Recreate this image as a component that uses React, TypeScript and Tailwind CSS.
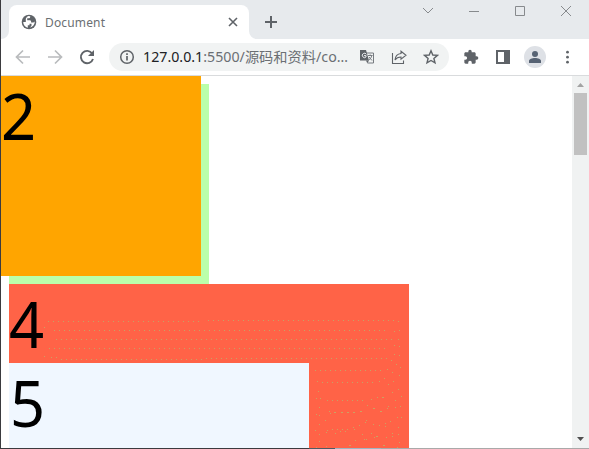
import React from 'react';

const FLECK_ROWS: [number, number, number][] = [
  [48, 203, 321], [208, 394, 320], [54, 389, 330], [56, 392, 339], [49, 389, 348],
  [61, 202, 359], [206, 387, 358], [315, 381, 370], [322, 373, 382], [327, 363, 400],
];

const FLECKS: [number, number][] = [
  [44, 327], [44, 356], [51, 357], [56, 357], [398, 321], [394, 331], [399, 330], [398, 339],
  [394, 345], [399, 346], [394, 354], [399, 355], [391, 360], [396, 364], [400, 367], [387, 369],
  [392, 372], [384, 378], [399, 375], [379, 381], [388, 384], [393, 381], [317, 381], [318, 391],
  [316, 398], [320, 398], [398, 389], [401, 396], [392, 392], [371, 399], [377, 397], [382, 397],
  [383, 397], [395, 400], [400, 406], [395, 407], [388, 406], [387, 408], [373, 408], [374, 408],
  [367, 405], [319, 407], [329, 411], [330, 413], [334, 412], [335, 412], [341, 412], [342, 412],
  [347, 412], [348, 412], [353, 412], [354, 412], [360, 411], [361, 411], [380, 411], [381, 411],
  [316, 414], [319, 415], [325, 420], [319, 424], [365, 422], [366, 420], [359, 425], [353, 427],
  [354, 429], [373, 424], [379, 425], [385, 423], [385, 426], [390, 421], [397, 417], [401, 417],
  [398, 427], [315, 430], [319, 434], [326, 432], [327, 430], [332, 429], [337, 429], [342, 429],
  [347, 429], [335, 433], [340, 431], [345, 431], [362, 434], [371, 433], [376, 436], [377, 436],
  [374, 437], [386, 437], [392, 436], [392, 433], [398, 434], [364, 439], [366, 439], [355, 440],
  [319, 441], [399, 442], [349, 445], [350, 445], [383, 445], [384, 445], [326, 446], [316, 447], [397, 447],
];

function TabStrip() {
  return (
    <div className="flex h-[39px] bg-[#e7eaed]">
      <div className="relative ml-2 mt-[5px] flex h-[34px] w-60 items-center rounded-t-lg bg-white pl-3 pr-[11px]">
        <svg className="absolute -left-2 bottom-0" width="8" height="8" viewBox="0 0 8 8"><path d="M8 0v8H0a8 8 0 0 0 8-8" fill="#fff" /></svg>
        <svg className="absolute -right-2 bottom-0" width="8" height="8" viewBox="0 0 8 8"><path d="M0 0v8h8a8 8 0 0 1-8-8" fill="#fff" /></svg>
        <svg width="16" height="16" viewBox="0 0 16 16">
          <circle cx="8" cy="8" r="7.3" fill="#5f6368" />
          <path d="M2.2 8.1h4c1.5 0 2.3.8 2.3 2v1.2H6.8v2.5C4.2 13.3 2.2 11 2.2 8.1M9.2 2.2v.5c0 .9-.7 1.6-1.6 1.6H6.2v1.9H8.6c.9 0 1.5.6 1.5 1.4v1h2.3l1.4-1.2c-.1 3.1-2 5.3-4.8 6.1l1.5-1.8V9.8H8.8C7.4 9.8 6.7 9 6.7 8H4.8V5.2C4.8 4 5.4 3.4 6.5 3V2.1z" fill="#fff" />
        </svg>
        <span className="ml-2 mt-px flex-1 text-[12px] tracking-[0.15px] text-[#6b6f73]">Document</span>
        <svg width="10" height="10" viewBox="0 0 10 10" stroke="#5f6368" strokeWidth="1.6"><path d="m1 1 8 8M9 1 1 9" /></svg>
      </div>
      <svg className="ml-4 mt-4" width="12" height="12" viewBox="0 0 12 12" stroke="#5f6368" strokeWidth="2"><path d="M0 6h12M6 0v12" /></svg>
      <div className="ml-auto mr-[17px] flex h-[22px] items-center text-[#878a8d]">
        <svg width="12" height="12" viewBox="0 0 12 12" fill="none" stroke="currentColor"><path d="m1 3 5 5 5-5" /></svg>
        <svg className="ml-[34px]" width="12" height="12" viewBox="0 0 12 12" stroke="currentColor"><path d="M1 6.5h10" /></svg>
        <svg className="ml-[34px]" width="12" height="12" viewBox="0 0 12 12" fill="none" stroke="currentColor"><path d="M1.5 1.5h9v9h-9z" /></svg>
        <svg className="ml-[34px]" width="12" height="12" viewBox="0 0 12 12" stroke="currentColor"><path d="m1 1 10 10M11 1 1 11" /></svg>
      </div>
    </div>
  );
}

function Toolbar() {
  return (
    <div className="flex h-[37px] items-center border-b border-[#d9dbdd] bg-white pl-[14px] text-[#5f6368]">
      <svg width="16" height="16" viewBox="0 0 16 16" fill="none" stroke="#b9bbbd" strokeWidth="1.7"><path d="M15 8H2M8 1.5 1.5 8 8 14.5" /></svg>
      <svg className="ml-4" width="16" height="16" viewBox="0 0 16 16" fill="none" stroke="#b9bbbd" strokeWidth="1.7"><path d="M1 8h13M8 1.5 14.5 8 8 14.5" /></svg>
      <svg className="ml-4" width="16" height="16" viewBox="0 0 16 16" fill="none" stroke="currentColor" strokeWidth="1.9"><path d="M13.2 4.5A6.2 6.2 0 1 0 14 10" /><path d="M15 1v6H9z" fill="currentColor" stroke="none" /></svg>
      <div className="ml-[14px] flex h-7 w-[340px] items-center rounded-full bg-[#f1f3f3] pl-[10px]">
        <svg width="16" height="16" viewBox="0 0 16 16" fill="none" stroke="currentColor"><circle cx="8" cy="8" r="6.3" strokeWidth="1.5" /><path d="M8 7v4.5M8 4.3v1.6" strokeWidth="1.7" /></svg>
        <div className="ml-2 flex w-[207px] whitespace-nowrap text-[14px] leading-5 text-[#6b6f73]">
          <svg className="overflow-visible" width="206" height="20">
            <text x="0" y="15" textLength="205" lengthAdjust="spacingAndGlyphs" fill="#6b6f73"><tspan fill="#202124">127.0.0.1</tspan>:5500/源码和资料/co…</text>
          </svg>
        </div>
        <svg className="ml-[9px]" width="16" height="16" viewBox="0 0 16 16">
          <path d="M6 4h8.5v10H8.5" fill="#f1f3f3" stroke="#777b80" />
          <path d="M1 1h6l3 10.5H1z" fill="#5f6368" />
          <path d="M7.4 5.3A2.2 2.2 0 1 0 7 8V6.6H5" fill="none" stroke="#e8eaed" />
          <path d="M9 6.5h4.5M11.2 5.5v1M12.8 6.5c-.4 2-1.5 3.5-3 4.5M10 8l3 3.5" fill="none" stroke="#777b80" />
          <path d="m7 11.5 3 0-1.7 2.8z" fill="#5f6368" />
        </svg>
        <svg className="ml-4" width="16" height="16" viewBox="0 0 16 16" fill="none" stroke="currentColor" strokeWidth="1.1"><path d="M1.5 4v10.5h11v-3" /><path d="M10 2.2 15 6.2l-5 4V8C7.3 8 5.3 9 4 11c.3-3.7 2.3-6.1 6-6.5z" /></svg>
        <svg className="ml-4" width="16" height="16" viewBox="0 0 16 16" fill="none" stroke="currentColor" strokeWidth="1.4"><path d="m8 1.8 1.8 4.2 4.6.4-3.5 3 1.1 4.5L8 11.5l-4 2.4 1.1-4.5-3.5-3L6.2 6z" /></svg>
      </div>
      <svg className="ml-[14px]" width="16" height="16" viewBox="0 0 24 24" fill="currentColor"><path d="M20.5 11H19V7c0-1.1-.9-2-2-2h-4V3.5a2.5 2.5 0 0 0-5 0V5H4c-1.1 0-2 .9-2 2v3.8h1.5a2.7 2.7 0 0 1 0 5.4H2V20c0 1.1.9 2 2 2h3.8v-1.5a2.7 2.7 0 0 1 5.4 0V22H17c1.1 0 2-.9 2-2v-4h1.5a2.5 2.5 0 0 0 0-5" /></svg>
      <svg className="ml-4" width="16" height="16" viewBox="0 0 16 16"><path fill="currentColor" fillRule="evenodd" d="M1 1h14v14H1zm2 2v10h6V3z" /></svg>
      <div className="ml-[13px] flex h-[22px] w-[22px] items-center justify-center rounded-full bg-[#dee1e6]">
        <svg width="14" height="14" viewBox="0 0 14 14" fill="#566273"><circle cx="7" cy="4" r="3" /><path d="M1 13v-2c0-2 3-3 6-3s6 1 6 3v2z" /></svg>
      </div>
      <svg className="ml-[13px]" width="16" height="16" viewBox="0 0 16 16" fill="currentColor"><circle cx="8.5" cy="3.2" r="1.4" /><circle cx="8.5" cy="8.2" r="1.4" /><circle cx="8.5" cy="13.2" r="1.4" /></svg>
    </div>
  );
}

function Digit({ value }: { value: string }) {
  return <span className="block w-10 origin-left scale-x-[0.96] text-[64px] leading-[79px] text-black">{value}</span>;
}

export default function App() {
  return (
    <div className="flex h-[449px] w-[589px] flex-col overflow-hidden border-l border-[#3b3b3f] bg-white font-['Noto_Sans','Noto_Sans_CJK_SC',sans-serif]">
      <TabStrip />
      <Toolbar />
      <div className="flex h-[372px]">
        <main className="relative flex-1 overflow-hidden bg-white p-2">
          <div className="h-[200px] w-[200px] bg-[#bbffaa]" />
          <div className="absolute left-0 top-0 h-[200px] w-[200px] bg-[#ffa500]"><Digit value="2" /></div>
          <div className="relative h-[400px] w-[400px] bg-[#ff6347]">
            <div className="h-[79px]"><Digit value="4" /></div>
            <svg className="absolute left-0 top-0" width="400" height="164" viewBox="9 284 400 164" shapeRendering="crispEdges">
              {FLECK_ROWS.map(([from, to, y]) => (
                <path key={`${from}-${y}`} d={`M${from} ${y + 0.5}H${to}`} stroke="#c5a266" strokeDasharray="1 4" />
              ))}
              {FLECKS.map(([x, y]) => <rect key={`${x}-${y}`} x={x} y={y} width="1" height="1" fill="#cda062" />)}
            </svg>
            <div className="relative h-[300px] w-[300px] bg-[#f0f7ff] pl-px"><Digit value="5" /></div>
          </div>
        </main>
        <aside className="flex w-[17px] flex-col items-center bg-[#f0f2f2]">
          <svg width="17" height="17" viewBox="0 0 17 17"><path d="m5 11 3.5-4 3.5 4z" fill="#a3a3a3" /></svg>
          <div className="h-[62px] w-[13px] bg-[#c1c1c1]" />
          <svg className="mt-auto" width="17" height="17" viewBox="0 0 17 17"><path d="m5 6 3.5 4L12 6z" fill="#505050" /></svg>
        </aside>
      </div>
      <div className="flex h-px">
        <div className="w-[308px] bg-[#3b3b3f]" />
        <div className="w-[26px] bg-[#4f5a63]" />
        <div className="w-[46px] bg-[#9fb5c0]" />
        <div className="flex-1 bg-[#a9a9a9]" />
      </div>
    </div>
  );
}
